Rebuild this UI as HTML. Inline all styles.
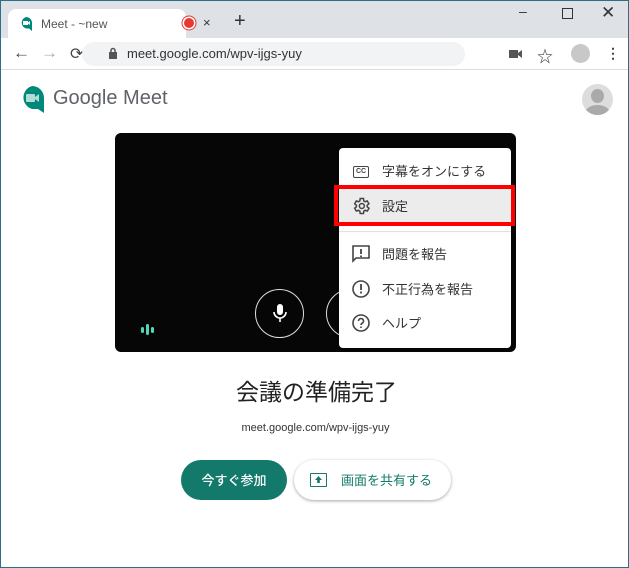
<!DOCTYPE html>
<html><head><meta charset="utf-8"><style>
*{margin:0;padding:0;box-sizing:border-box}
body{width:629px;height:568px;overflow:hidden;background:#fff;font-family:"Liberation Sans","Noto Sans CJK JP",sans-serif;position:relative;border:1px solid #2d6f8a}
.abs{position:absolute}
.jp{font-family:"Noto Sans CJK JP","Liberation Sans",sans-serif;line-height:1.2}
</style></head><body>
<div class="abs" style="left:0;top:0;width:627px;height:37px;background:#dee1e6"></div>
<div class="abs" style="left:7px;top:8px;width:178px;height:29px;background:#fff;border-radius:8px 8px 0 0"></div>
<svg class="abs" style="left:18px;top:15px" width="14" height="16" viewBox="0 0 14 16"><path d="M7 1a6 6 0 0 1 6 6v8l-3-2.5H7A6 6 0 0 1 7 1z" fill="#00897b"/><rect x="4" y="5" width="5" height="4" fill="#fff"/><path d="M9 6.5l2-1.5v4l-2-1.5z" fill="#fff"/></svg>
<div class="abs" style="left:40px;top:16px;font-size:12px;color:#555">Meet - ~new</div>
<div class="abs" style="left:183px;top:17px;width:10px;height:10px;border-radius:50%;background:#e53935;box-shadow:0 0 0 1.5px #fff,0 0 0 2.5px #e53935"></div>
<div class="abs" style="left:202px;top:14px;font-size:13px;color:#333">×</div>
<div class="abs" style="left:233px;top:9px;font-size:20px;color:#333">+</div>
<div class="abs" style="left:518px;top:2px;font-size:14px;color:#333">–</div>
<div class="abs" style="left:561px;top:7px;width:11px;height:11px;border:1.5px solid #333"></div>
<div class="abs" style="left:600px;top:2px;font-size:17px;color:#333">✕</div>
<div class="abs" style="left:0;top:37px;width:627px;height:32px;background:#fff;border-bottom:1px solid #ddd"></div>
<div class="abs" style="left:12px;top:42px;font-size:17px;color:#444">←</div>
<div class="abs" style="left:40px;top:42px;font-size:17px;color:#aaa">→</div>
<div class="abs" style="left:69px;top:43px;font-size:16px;color:#444">⟳</div>
<div class="abs" style="left:81px;top:41px;width:383px;height:24px;background:#f1f3f4;border-radius:12px"></div>
<svg class="abs" style="left:107px;top:46px" width="10" height="13"><rect x="1" y="5" width="8" height="7" fill="#555"/><path d="M3 5V3.5a2 2 0 0 1 4 0V5" stroke="#555" fill="none" stroke-width="1.5"/></svg>
<div class="abs" style="left:126px;top:45px;font-size:13px;color:#333">meet.google.com/wpv-ijgs-yuy</div>
<svg class="abs" style="left:508px;top:48px" width="14" height="10"><rect x="0" y="1" width="9" height="8" fill="#555"/><path d="M9 4l4-3v8l-4-3z" fill="#555"/></svg>
<div class="abs" style="left:536px;top:42px;font-size:16px;color:#444">☆</div>
<div class="abs" style="left:570px;top:43px;width:19px;height:19px;border-radius:50%;background:#c8c8c8"></div>
<div class="abs" style="left:605px;top:44px;font-size:14px;color:#444;font-weight:bold">⋮</div>
<svg class="abs" style="left:18px;top:84px" width="26" height="30" viewBox="0 0 26 30"><path d="M13 1a12 12 0 0 1 12 12v15l-6-4H13A12 12 0 0 1 13 1z" fill="#00897b"/><rect x="7" y="9" width="9" height="8" rx="1" fill="#b3dcd6"/><path d="M16 12l4-3v8l-4-3z" fill="#b3dcd6"/></svg>
<div class="abs" style="left:52px;top:86px;font-size:20px;color:#5f6368">Google Meet</div>
<div class="abs" style="left:581px;top:83px;width:31px;height:31px;border-radius:50%;background:#ddd;overflow:hidden"><div class="abs" style="left:9px;top:5px;width:13px;height:14px;border-radius:50%;background:#aaa"></div><div class="abs" style="left:3px;top:21px;width:25px;height:16px;border-radius:50%;background:#aaa"></div></div>

<div class="abs" style="left:114px;top:132px;width:401px;height:219px;background:#060606;border-radius:6px"></div>
<div class="abs" style="left:140px;top:323px;width:14px;height:11px"><div class="abs" style="left:0;top:3px;width:3px;height:6px;background:#4fd8b8;border-radius:2px"></div><div class="abs" style="left:5px;top:0;width:3px;height:11px;background:#4fd8b8;border-radius:2px"></div><div class="abs" style="left:10px;top:3px;width:3px;height:6px;background:#4fd8b8;border-radius:2px"></div></div>
<div class="abs" style="left:254px;top:288px;width:49px;height:49px;border-radius:50%;border:1px solid #ddd"></div>
<svg class="abs" style="left:271px;top:302px" width="16" height="20"><rect x="5" y="1" width="6" height="11" rx="3" fill="#fff"/><path d="M2 9a6 6 0 0 0 12 0M8 15v4" stroke="#fff" fill="none" stroke-width="1.6"/></svg>
<div class="abs" style="left:325px;top:288px;width:49px;height:49px;border-radius:50%;border:1px solid #ddd"></div>

<div class="abs" style="left:338px;top:147px;width:172px;height:200px;background:#fff;border-radius:4px;box-shadow:0 1px 4px rgba(0,0,0,.3)"></div>
<div class="abs" style="left:338px;top:187px;width:172px;height:35px;background:#ececec"></div>
<div class="abs" style="left:333px;top:184px;width:181px;height:41px;border:4px solid #ff0000"></div>
<div class="abs" style="left:338px;top:230px;width:172px;height:1px;background:#e0e0e0"></div>
<div class="abs" style="left:352px;top:165px;width:16px;height:12px;border:1.5px solid #444;border-radius:2px;font-size:7px;line-height:9px;text-align:center;color:#444;font-weight:bold">CC</div>
<svg class="abs" style="left:350px;top:195px" width="20" height="20" viewBox="0 0 24 24"><path d="M19.4 13a7.5 7.5 0 0 0 0-2l2.1-1.6-2-3.5-2.5 1a7 7 0 0 0-1.7-1L15 3h-4l-.4 2.9a7 7 0 0 0-1.7 1l-2.5-1-2 3.5L6.5 11a7.5 7.5 0 0 0 0 2l-2.1 1.6 2 3.5 2.5-1a7 7 0 0 0 1.7 1L11 21h4l.4-2.9a7 7 0 0 0 1.7-1l2.5 1 2-3.5z" fill="none" stroke="#444" stroke-width="1.8"/><circle cx="13" cy="12" r="3" fill="none" stroke="#444" stroke-width="1.8"/></svg>
<svg class="abs" style="left:350px;top:243px" width="20" height="20" viewBox="0 0 20 20"><path d="M2 2h16v12H5l-3 3z" fill="none" stroke="#444" stroke-width="1.6"/><path d="M10 5v5M10 11.5v1.5" stroke="#444" stroke-width="1.8"/></svg>
<svg class="abs" style="left:350px;top:278px" width="20" height="20" viewBox="0 0 20 20"><circle cx="10" cy="10" r="8" fill="none" stroke="#444" stroke-width="1.6"/><path d="M10 5v6M10 12.5v2" stroke="#444" stroke-width="1.8"/></svg>
<svg class="abs" style="left:350px;top:312px" width="20" height="20" viewBox="0 0 20 20"><circle cx="10" cy="10" r="8" fill="none" stroke="#444" stroke-width="1.6"/><path d="M7.5 8a2.5 2.5 0 1 1 3.5 2.3c-.8.4-1 .9-1 1.7M10 13.5v1.5" fill="none" stroke="#444" stroke-width="1.6"/></svg>
<div class="abs jp" style="left:381px;top:162px;font-size:13px;color:#333">字幕をオンにする</div>
<div class="abs jp" style="left:381px;top:197px;font-size:13px;color:#333">設定</div>
<div class="abs jp" style="left:381px;top:245px;font-size:13px;color:#333">問題を報告</div>
<div class="abs jp" style="left:381px;top:280px;font-size:13px;color:#333">不正行為を報告</div>
<div class="abs jp" style="left:381px;top:314px;font-size:13px;color:#333">ヘルプ</div>

<div class="abs jp" style="left:0;top:376px;width:627px;text-align:center;font-size:23px;color:#222;padding-left:4px">会議の準備完了</div>
<div class="abs" style="left:0;top:421px;width:627px;text-align:center;font-size:11px;color:#333;padding-left:2px">meet.google.com/wpv-ijgs-yuy</div>
<div class="abs jp" style="left:180px;top:459px;width:106px;height:40px;border-radius:20px;background:#137a6b;color:#fff;font-size:13px;line-height:40px;text-align:center;font-weight:500">今すぐ参加</div>
<div class="abs" style="left:293px;top:459px;width:157px;height:40px;border-radius:20px;background:#fff;box-shadow:0 1px 3px rgba(0,0,0,.35)"></div>
<div class="abs" style="left:309px;top:472px;width:17px;height:14px;border:1.6px solid #137a6b;border-radius:1px"></div>
<svg class="abs" style="left:313px;top:474px" width="9" height="9"><path d="M4.5 1L1 5h2.2v3h2.6V5H8z" fill="#137a6b"/></svg>
<div class="abs jp" style="left:340px;top:471px;font-size:13px;color:#137a6b">画面を共有する</div>
</body></html>
